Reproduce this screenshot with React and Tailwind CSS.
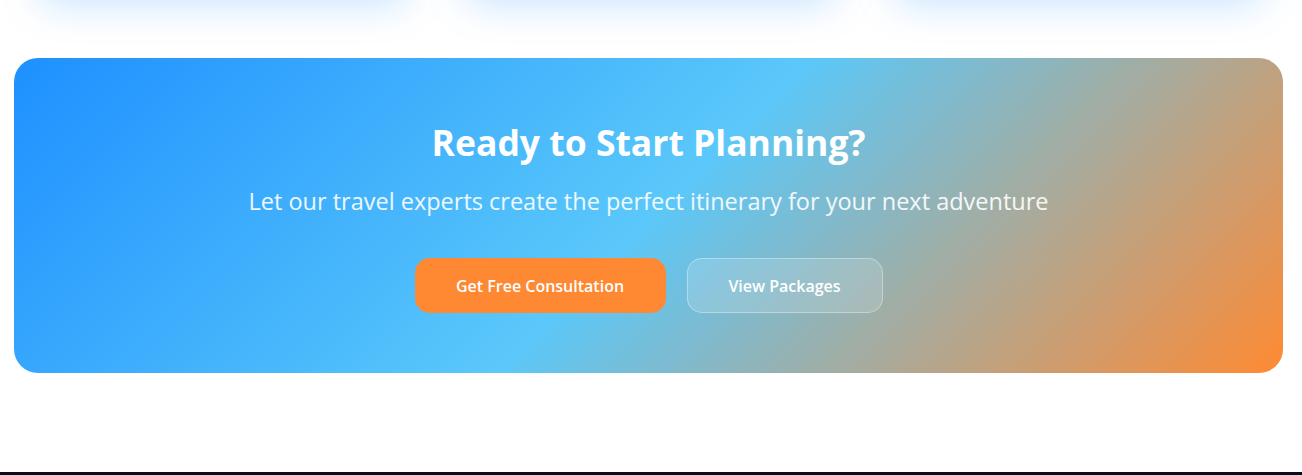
export default function App() {
  return (
    <div className="w-[1302px] h-[475px] overflow-hidden bg-white flex flex-col" style={{ fontFamily: '"Open Sans", "Noto Sans", sans-serif' }}>
      <div className="h-[58px] shrink-0 overflow-hidden">
        <div className="grid grid-cols-3 gap-[60px] px-[40px] h-[100px] -translate-y-[110px]">
          <div className="bg-white rounded-2xl shadow-[0_12px_40px_rgba(30,144,255,0.28)]"></div>
          <div className="bg-white rounded-2xl shadow-[0_12px_40px_rgba(30,144,255,0.28)]"></div>
          <div className="bg-white rounded-2xl shadow-[0_12px_40px_rgba(30,144,255,0.28)]"></div>
        </div>
      </div>
      <div className="ml-[14px] w-[1269px] h-[315px] shrink-0 rounded-[24px] bg-[linear-gradient(135deg,#1e90ff_0%,#5ac8fa_50%,#ff8a33_100%)] flex flex-col items-center pt-[62px]">
        <h2 className="text-[35.5px] leading-[44px] font-bold text-white">Ready to Start Planning?</h2>
        <p className="mt-[21px] text-[23.5px] leading-[32px] text-white/90">Let our travel experts create the perfect itinerary for your next adventure</p>
        <div className="mt-[41px] flex gap-[21px]">
          <button className="w-[251px] h-[55px] rounded-[15px] bg-[#ff8833] text-white text-[16px] font-semibold">Get Free Consultation</button>
          <button className="w-[196px] h-[55px] rounded-[15px] bg-white/15 border border-white/35 text-white text-[16px] font-semibold">View Packages</button>
        </div>
      </div>
      <div className="h-[99px] shrink-0"></div>
      <div className="flex-1 bg-[#0b0b1f]"></div>
    </div>
  );
}
